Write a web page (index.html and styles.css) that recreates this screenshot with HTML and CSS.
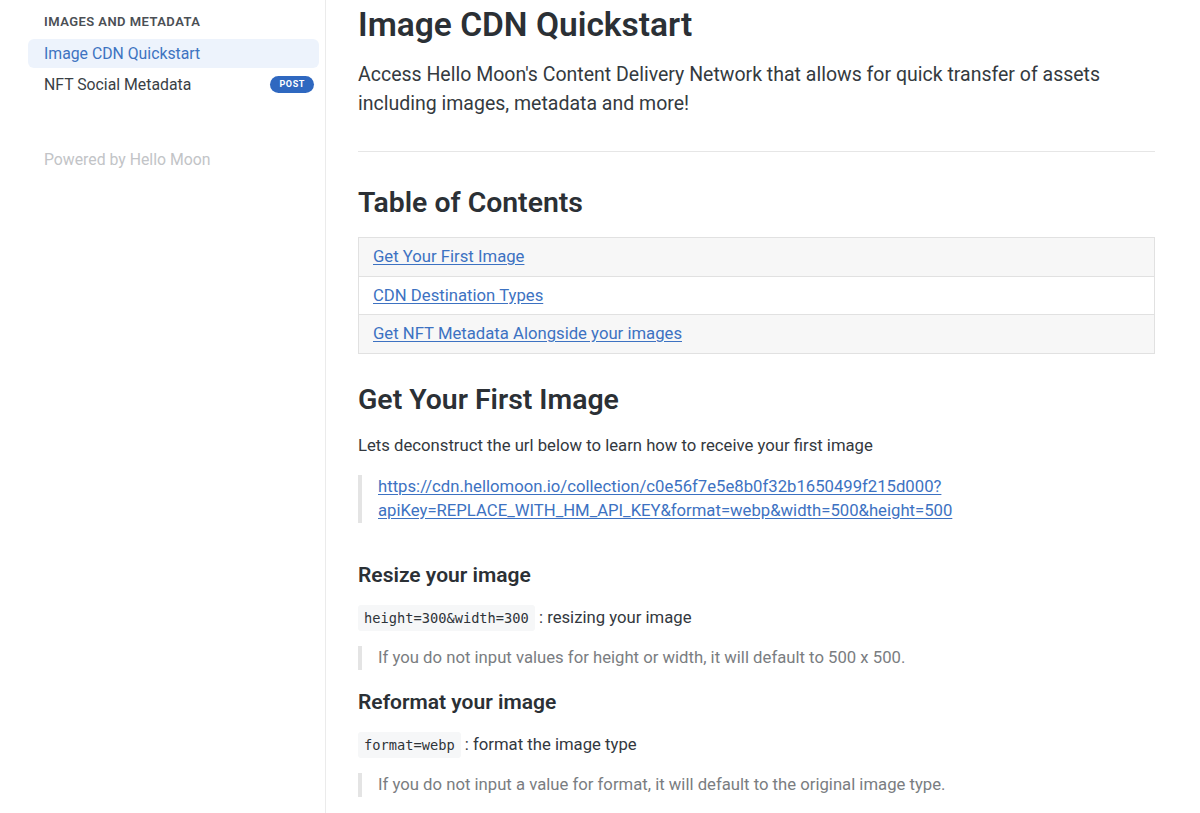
FILE: index.html
```html
<!DOCTYPE html>
<html lang="en">
<head>
<meta charset="utf-8">
<title>Image CDN Quickstart</title>
<link rel="stylesheet" href="styles.css">
</head>
<body>
<div class="layout">
  <aside class="sidebar">
    <div class="section-title">IMAGES AND METADATA</div>
    <nav class="nav">
      <a class="nav-item active" href="#">Image CDN Quickstart</a>
      <a class="nav-item" href="#"><span>NFT Social Metadata</span><span class="badge">POST</span></a>
    </nav>
    <div class="powered">Powered by Hello Moon</div>
  </aside>
  <main class="content">
    <h1>Image CDN Quickstart</h1>
    <p class="lead">Access Hello Moon's Content Delivery Network that allows for quick transfer of assets including images, metadata and more!</p>
    <hr class="rule">
    <h2>Table of Contents</h2>
    <table class="toc">
      <tr class="odd"><td><a href="#">Get Your First Image</a></td></tr>
      <tr><td><a href="#">CDN Destination Types</a></td></tr>
      <tr class="odd"><td><a href="#">Get NFT Metadata Alongside your images</a></td></tr>
    </table>
    <h2 class="h2-second">Get Your First Image</h2>
    <p class="text">Lets deconstruct the url below to learn how to receive your first image</p>
    <blockquote class="quote link-quote"><a href="#">https://cdn.hellomoon.io/collection/c0e56f7e5e8b0f32b1650499f215d000?<br>apiKey=REPLACE_WITH_HM_API_KEY&amp;format=webp&amp;width=500&amp;height=500</a></blockquote>
    <h3 class="h3-first">Resize your image</h3>
    <p class="text"><code>height=300&amp;width=300</code> : resizing your image</p>
    <blockquote class="quote note">If you do not input values for height or width, it will default to 500 x 500.</blockquote>
    <h3>Reformat your image</h3>
    <p class="text"><code>format=webp</code> : format the image type</p>
    <blockquote class="quote note">If you do not input a value for format, it will default to the original image type.</blockquote>
  </main>
</div>
</body>
</html>
```
FILE: styles.css
```css
* { box-sizing: border-box; }
html, body { margin: 0; padding: 0; background: #fff; }
body {
  font-family: "Roboto", "Noto Sans", sans-serif;
  color: #2f3439;
  height: 813px;
  overflow: hidden;
}
.layout { display: flex; align-items: stretch; min-height: 813px; }
.sidebar {
  width: 326px;
  flex: 0 0 326px;
  border-right: 1px solid #ebebeb;
  padding: 14px 6px 0 28px;
}
.section-title {
  font-size: 13px;
  font-weight: 600;
  color: #4b4f55;
  letter-spacing: 0.45px;
  padding-left: 16px;
  line-height: 16px;
}
.nav { display: flex; flex-direction: column; margin-top: 9px; gap: 2px; }
.nav-item {
  display: flex;
  align-items: center;
  justify-content: space-between;
  height: 29px;
  padding: 0 5px 0 16px;
  font-size: 15.8px;
  color: #3a3f45;
  text-decoration: none;
  border-radius: 6px;
}
.nav-item.active { background: #edf3fc; color: #3e73c1; }
.badge {
  background: #2f68c0;
  color: #fff;
  font-size: 9px;
  font-weight: 700;
  letter-spacing: 0.6px;
  height: 17px;
  line-height: 17px;
  padding: 0 9px;
  border-radius: 9px;
}
.powered {
  margin-top: 51px;
  padding-left: 16px;
  font-size: 15.8px;
  color: #c2c4c7;
}
.content {
  flex: 1;
  padding: 0 45px 0 32px;
}
h1 {
  font-size: 33.5px;
  font-weight: 600;
  margin: 4px 0 0;
  line-height: 42px;
  color: #2b3035;
}
.lead {
  font-size: 19.5px;
  line-height: 29px;
  margin: 14px 0 0;
  color: #343a40;
}
.rule { border: 0; border-top: 1px solid #e6e6e6; margin: 33px 0 0; }
h2 {
  font-size: 28.4px;
  font-weight: 600;
  line-height: 40px;
  margin: 31px 0 0;
  color: #2b3035;
}
.h2-second { margin-top: 26px; }
.toc {
  width: 100%;
  border-collapse: collapse;
  margin-top: 14px;
}
.toc td {
  border: 1px solid #e1e1e1;
  height: 38.5px;
  padding: 0 14px;
  font-size: 16.7px;
}
.toc tr.odd td { background: #f7f7f7; }
a { color: #3d72c2; }
.toc a { text-decoration: underline; text-underline-offset: 2px; }
.text {
  font-size: 16.7px;
  line-height: 24px;
  margin: 14px 0 0;
  color: #33383e;
}
.quote {
  margin: 17px 0 0;
  border-left: 4px solid #e4e4e4;
  padding: 0 0 0 16px;
  font-size: 16.7px;
  line-height: 24px;
}
.link-quote a { text-decoration: underline; text-underline-offset: 2px; }
.note { color: #7a7d81; margin-top: 16px; }
h3 {
  font-size: 21px;
  font-weight: 600;
  line-height: 28px;
  margin: 18px 0 0;
  color: #2b3035;
}
.h3-first { margin-top: 38px; }
h3 + .text { margin-top: 17px; }
code {
  font-family: "DejaVu Sans Mono", "Liberation Mono", monospace;
  font-size: 13.7px;
  background: #f6f7f8;
  padding: 5px 6px;
  border-radius: 3px;
  color: #2f3439;
}
```
